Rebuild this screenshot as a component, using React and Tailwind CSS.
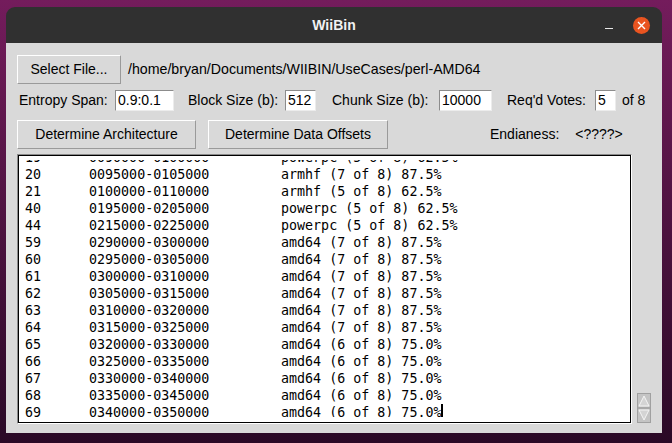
import React from 'react';

const rows = [
    ['19', '0090000-0100000', 'powerpc (5 of 8) 62.5%'],
    ['20', '0095000-0105000', 'armhf (7 of 8) 87.5%'],
    ['21', '0100000-0110000', 'armhf (5 of 8) 62.5%'],
    ['40', '0195000-0205000', 'powerpc (5 of 8) 62.5%'],
    ['44', '0215000-0225000', 'powerpc (5 of 8) 62.5%'],
    ['59', '0290000-0300000', 'amd64 (7 of 8) 87.5%'],
    ['60', '0295000-0305000', 'amd64 (7 of 8) 87.5%'],
    ['61', '0300000-0310000', 'amd64 (7 of 8) 87.5%'],
    ['62', '0305000-0315000', 'amd64 (7 of 8) 87.5%'],
    ['63', '0310000-0320000', 'amd64 (7 of 8) 87.5%'],
    ['64', '0315000-0325000', 'amd64 (7 of 8) 87.5%'],
    ['65', '0320000-0330000', 'amd64 (6 of 8) 75.0%'],
    ['66', '0325000-0335000', 'amd64 (6 of 8) 75.0%'],
    ['67', '0330000-0340000', 'amd64 (6 of 8) 75.0%'],
    ['68', '0335000-0345000', 'amd64 (6 of 8) 75.0%'],
    ['69', '0340000-0350000', 'amd64 (6 of 8) 75.0%'],
];

const TkButton = ({ children, className }) => (
    <button className={`h-[29px] bg-[#d9d9d9] border border-t-white border-l-white border-r-[#9a9a9a] border-b-[#9a9a9a] text-black ${className}`}>
        {children}
    </button>
);

const Entry = ({ value, className }) => (
    <div className={`h-[21px] bg-white border border-t-[#8c8c8c] border-l-[#8c8c8c] border-r-[#ececec] border-b-[#ececec] pl-[2px] flex items-center ${className}`}>
        {value}
    </div>
);

const App = () => {
    return (
        <div className="w-[672px] h-[443px] overflow-hidden bg-gradient-to-b from-[#741c5c] to-[#2a0926] pt-[7px] pl-[6px]">
            <div className="w-[656px] h-[426px] flex flex-col rounded-t-[9px] overflow-hidden" style={{ fontFamily: '"Liberation Sans", Arial, sans-serif' }}>
                {/* title bar */}
                <div className="h-[36px] bg-[#303030] grid grid-cols-[1fr_auto_1fr] items-center shrink-0">
                    <div />
                    <div className="text-[#f2f2f2] text-[14px] font-bold">WiiBin</div>
                    <div className="flex items-center justify-end pr-[12px] gap-[20px]">
                        <div className="w-[8px] h-[1.5px] bg-[#e8e8e8] mt-[7px]" />
                        <div className="w-[17px] h-[17px] rounded-full bg-[#e95420] flex items-center justify-center">
                            <svg width="9" height="9" viewBox="0 0 9 9">
                                <path d="M1 1 L8 8 M8 1 L1 8" stroke="#fff" strokeWidth="1.4" />
                            </svg>
                        </div>
                    </div>
                </div>

                {/* body */}
                <div className="flex-1 bg-[#d9d9d9] pl-[11px] pt-[12px] text-[14px] text-black">
                    <div className="flex items-center">
                        <TkButton className="w-[104px]">Select File...</TkButton>
                        <span className="ml-[7px] text-[14.2px]">/home/bryan/Documents/WIIBIN/UseCases/perl-AMD64</span>
                    </div>

                    <div className="flex items-center mt-[6px]">
                        <span className="w-[98px] pl-[2px]">Entropy Span:</span>
                        <Entry value="0.9:0.1" className="w-[59px]" />
                        <span className="w-[97px] ml-[14px]">Block Size (b):</span>
                        <Entry value="512" className="w-[31px]" />
                        <span className="w-[107px] ml-[16px]">Chunk Size (b):</span>
                        <Entry value="10000" className="w-[53px]" />
                        <span className="w-[88px] ml-[15px]">Req'd Votes:</span>
                        <Entry value="5" className="w-[21px]" />
                        <span className="ml-[6px]">of 8</span>
                    </div>

                    <div className="flex items-center mt-[9px]">
                        <TkButton className="w-[179px]">Determine Architecture</TkButton>
                        <TkButton className="w-[180px] ml-[12px]">Determine Data Offsets</TkButton>
                        <span className="ml-[102px]">Endianess:</span>
                        <span className="ml-[16px]">&lt;????&gt;</span>
                    </div>

                    <div className="flex items-end mt-[5px] gap-[5px]">
                        <div className="w-[615px] h-[270px] border border-t-[#8a8a8a] border-l-[#8a8a8a] border-r-white border-b-white">
                            <div className="w-full h-full border border-black bg-white pl-[6px] pt-[4px] pb-[5px]">
                                <div className="h-full overflow-hidden">
                                    <div
                                        className="-mt-[11px] text-[13.33px] leading-[17px] whitespace-pre"
                                        style={{ fontFamily: '"DejaVu Sans Mono", monospace' }}
                                    >
                                        {rows.map(([n, range, arch], i) => (
                                            <div key={n} className="flex">
                                                <span className="w-[64px]">{n}</span>
                                                <span className="w-[192px]">{range}</span>
                                                <span>{arch}</span>
                                                {i === rows.length - 1 && <span className="w-[2px] h-[16px] bg-black" />}
                                            </div>
                                        ))}
                                    </div>
                                </div>
                            </div>
                        </div>
                        <div className="w-[14px] h-[30px] mb-[1px] bg-[#c4c4c4] border border-[#a0a0a0]">
                            <svg width="12" height="28" viewBox="0 0 12 28">
                                <path d="M6 2 L11 12 L1 12 Z" fill="#d4d4d4" stroke="#f4f4f4" strokeWidth="1" />
                                <line x1="0" y1="14" x2="12" y2="14" stroke="#8e8e8e" />
                                <path d="M1 16 L11 16 L6 26 Z" fill="#d4d4d4" stroke="#f4f4f4" strokeWidth="1" />
                            </svg>
                        </div>
                    </div>
                </div>
            </div>
        </div>
    );
};

export default App;
